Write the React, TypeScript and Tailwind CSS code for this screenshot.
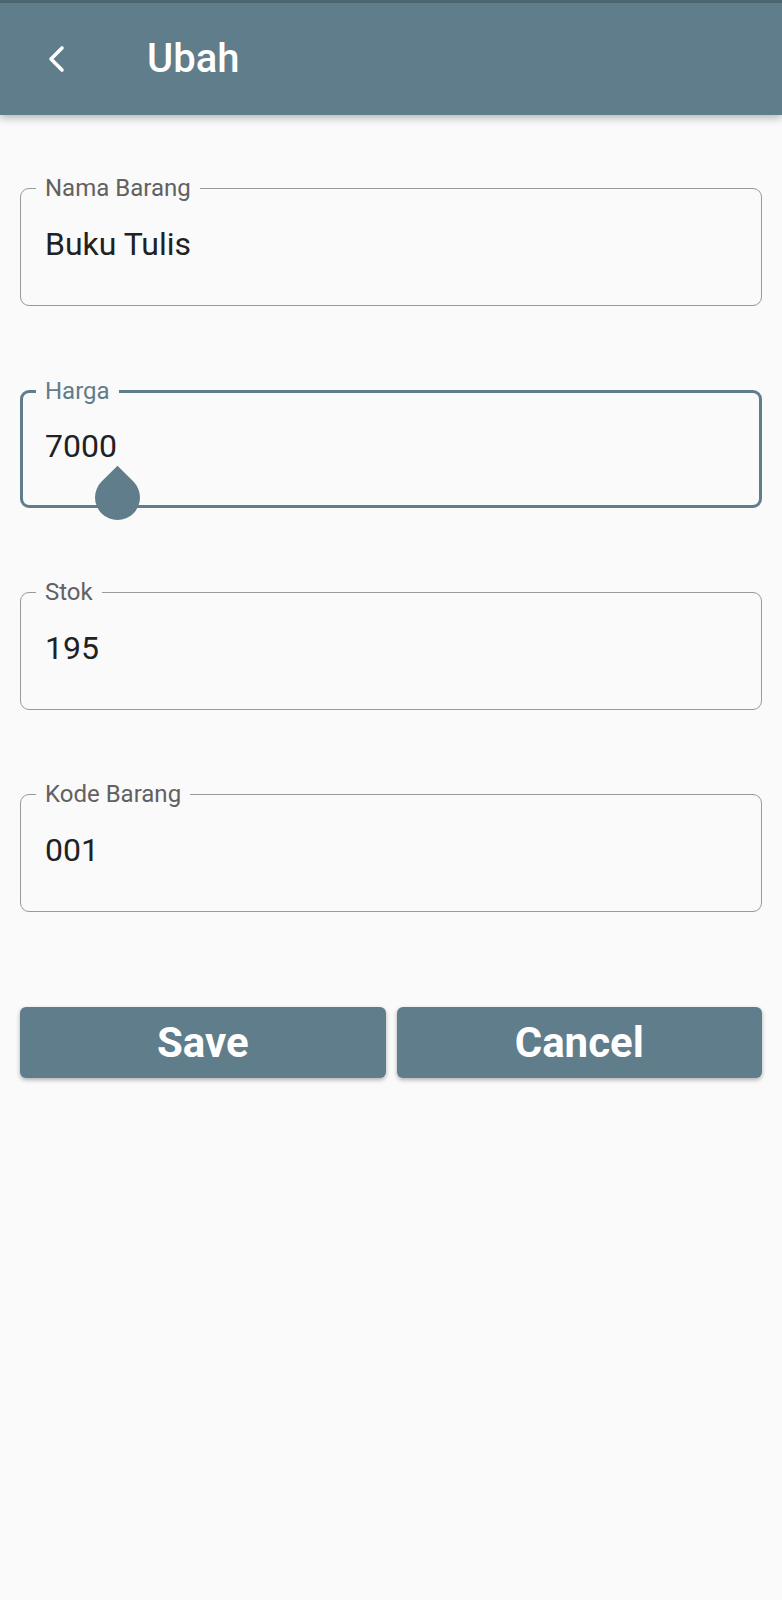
import React from 'react'

type FieldProps = {
  label: string
  value: string
  focused?: boolean
}

function Field({ label, value, focused = false }: FieldProps) {
  return (
    <div
      className={
        focused
          ? 'relative h-[118px] rounded-[9px] border-[3px] border-[#607d8b] pl-[22px] pt-[37px]'
          : 'relative h-[118px] rounded-[9px] border-[1.5px] border-[#999999] pl-[24px] pt-[38.5px]'
      }
    >
      {/* notched label */}
      <span
        className={
          focused
            ? 'absolute left-[13px] top-[-14px] bg-[#fafafa] px-[9px] text-[24px] leading-none text-[#607d8b]'
            : 'absolute left-[15px] top-[-13px] bg-[#fafafa] px-[9px] text-[24px] leading-none text-[#616161]'
        }
      >
        {label}
      </span>
      <div className="text-[32px] leading-none text-[#212121]">{value}</div>
      {focused && (
        // selection handle under the cursor
        <div className="absolute left-[72px] top-[82px] h-[45px] w-[45px] rotate-45 rounded-full rounded-tl-none bg-[#607d8b]" />
      )}
    </div>
  )
}

export default function App() {
  return (
    <div className="min-h-[1600px] bg-[#fafafa] font-['Roboto','Liberation_Sans',sans-serif]">
      {/* App bar */}
      <header className="flex h-[115px] items-center border-t-[3px] border-[#4b6470] bg-[#607d8b] shadow-[0_3px_8px_rgba(0,0,0,0.28)]">
        <div className="ml-[46px] flex h-[28px] w-[20px] items-center justify-center">
          <svg width="18" height="28" viewBox="0 0 18 28" fill="none">
            <polyline
              points="15,3 4,14 15,25"
              stroke="white"
              strokeWidth="3.6"
              strokeLinecap="round"
              strokeLinejoin="round"
            />
          </svg>
        </div>
        <h1 className="ml-[81px] text-[40px] font-medium leading-none text-white">Ubah</h1>
      </header>

      <main className="px-[20px] pt-[73px]">
        <div className="flex flex-col gap-[84px]">
          <Field label="Nama Barang" value="Buku Tulis" />
          <Field label="Harga" value="7000" focused />
          <Field label="Stok" value="195" />
          <Field label="Kode Barang" value="001" />
        </div>

        <div className="mt-[95px] flex gap-[11px]">
          <button className="flex h-[71px] flex-1 items-center justify-center rounded-[6px] bg-[#607d8b] text-[42px] font-bold leading-none text-white shadow-[0_2px_4px_rgba(0,0,0,0.3)]">
            Save
          </button>
          <button className="flex h-[71px] flex-1 items-center justify-center rounded-[6px] bg-[#607d8b] text-[42px] font-bold leading-none text-white shadow-[0_2px_4px_rgba(0,0,0,0.3)]">
            Cancel
          </button>
        </div>
      </main>
    </div>
  )
}
